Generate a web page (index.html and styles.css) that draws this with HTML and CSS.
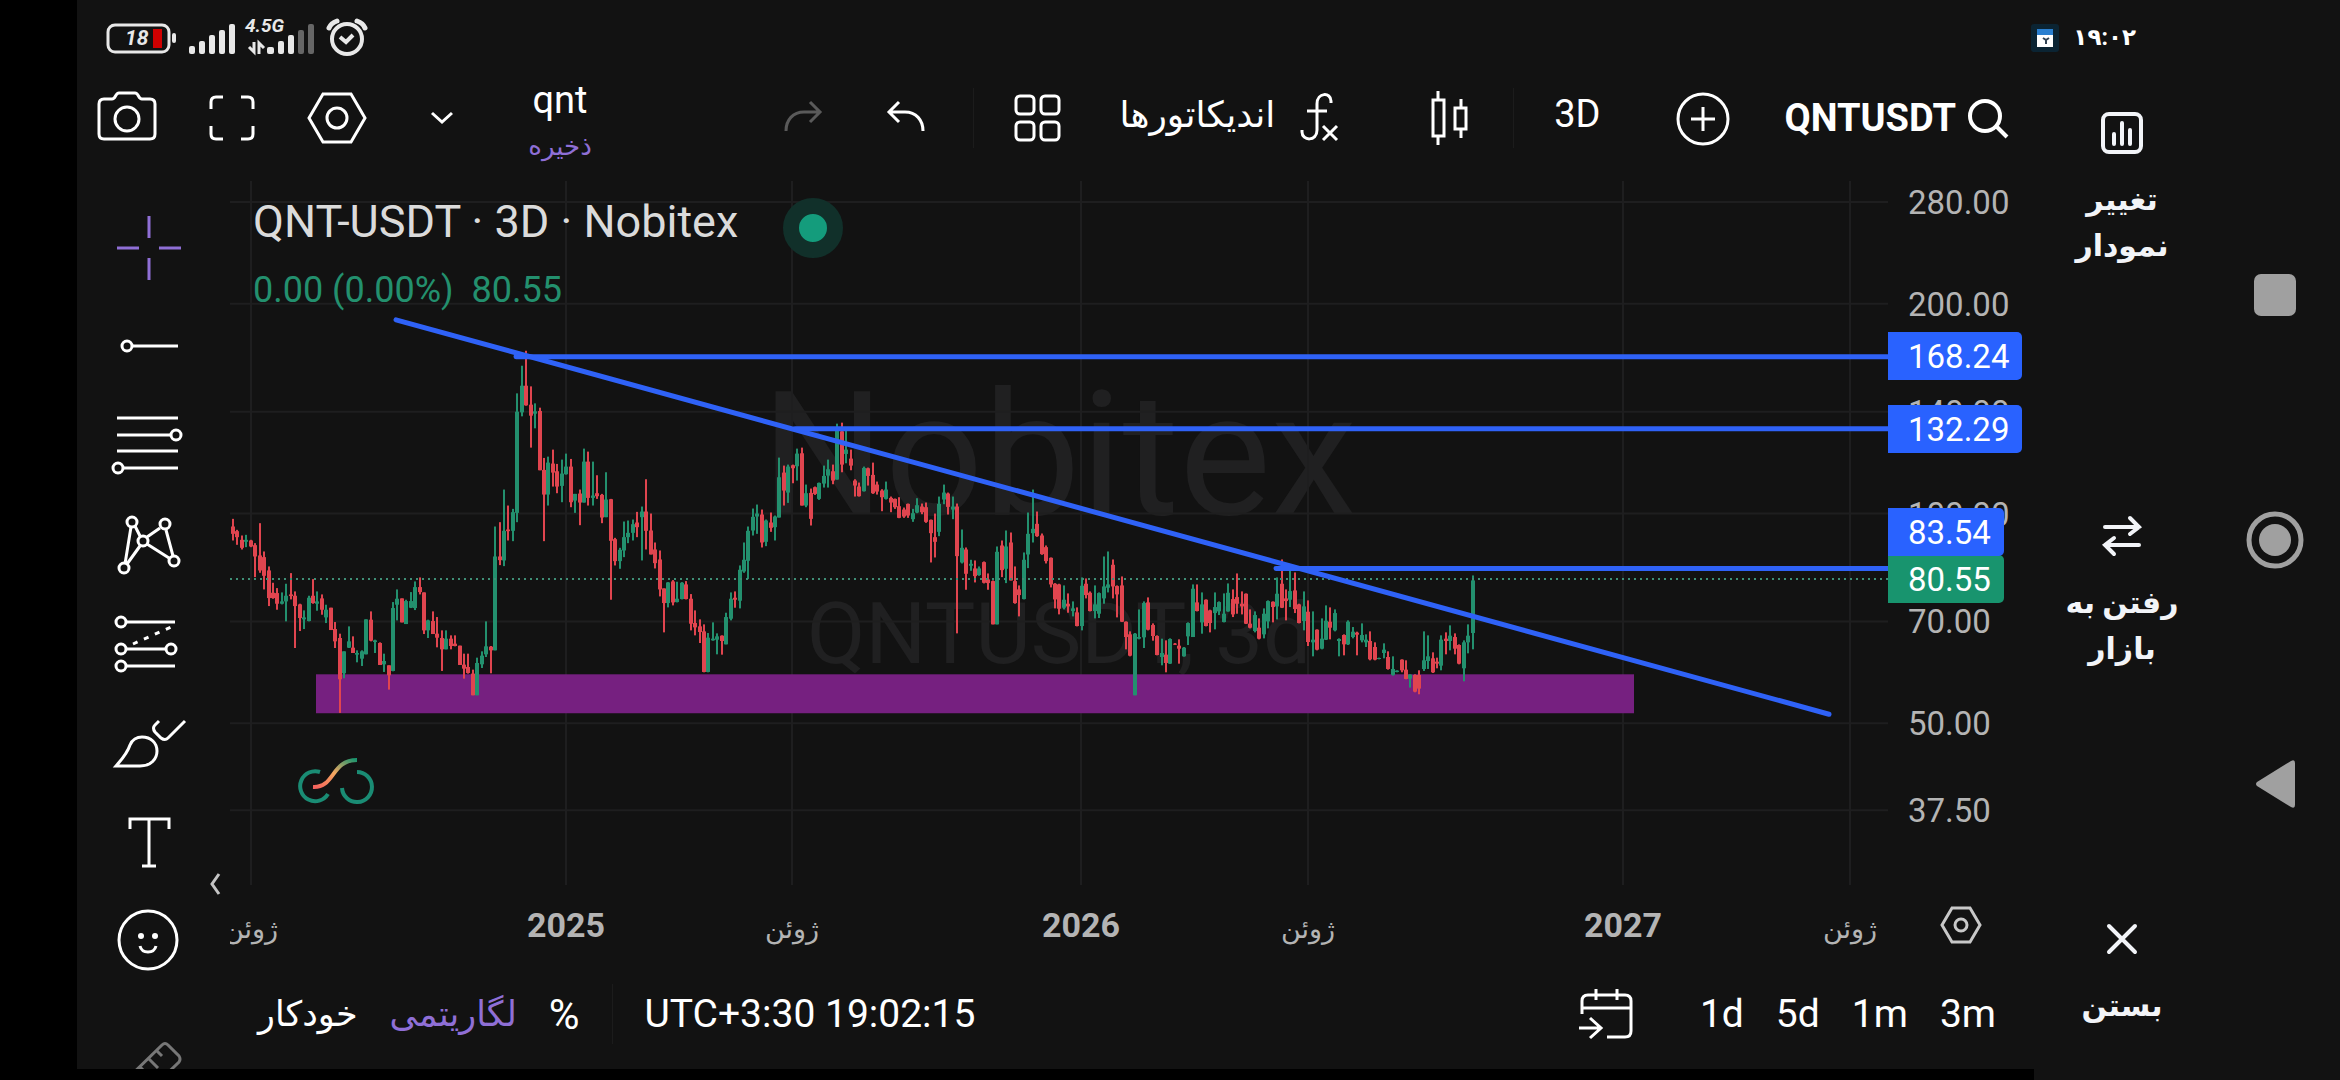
FILE: index.html
```html
<!DOCTYPE html>
<html lang="fa">

<head>
    <meta charset="utf-8">
    <meta name="viewport" content="width=device-width, initial-scale=1.0">
    <title>QNT-USDT</title>
    <link rel="stylesheet" href="styles.css">
</head>

<body>
    <div class="phone">
        <header class="status">
            <svg class="status-icons" width="266" height="50" viewBox="0 0 266 50" aria-hidden="true">
                <rect x="3" y="12" width="61" height="27" rx="7" fill="none" stroke="#e8e8e8" stroke-width="3" />
                <rect x="67" y="20" width="4" height="10" rx="2" fill="#e8e8e8" />
                <rect x="48" y="16" width="9" height="19" fill="#d00000" />
                <text class="battery-text" x="20" y="32">18</text>
                <g fill="#e8e8e8">
                    <rect x="84" y="33" width="6" height="8" rx="2" />
                    <rect x="94" y="28" width="6" height="13" rx="2" />
                    <rect x="104" y="22" width="6" height="19" rx="2" />
                    <rect x="114" y="17" width="6" height="24" rx="2" />
                    <rect x="124" y="11" width="6" height="30" rx="2" />
                    <rect x="162" y="34" width="7" height="7" rx="2" />
                    <rect x="173" y="28" width="6" height="13" rx="2" />
                    <rect x="183" y="22" width="6" height="19" rx="2" />
                </g>
                <rect x="193" y="17" width="6" height="24" rx="2" fill="#666" />
                <rect x="203" y="11" width="6" height="30" rx="2" fill="#666" />
                <path d="M149 29V39L144 34M154 41V30L159 35" fill="none" stroke="#e8e8e8" stroke-width="3" />
                <text class="network-text" x="140" y="19">4.5G</text>
                <g fill="none" stroke="#e8e8e8" stroke-width="4">
                    <circle cx="242" cy="26" r="15" />
                    <path d="M235 24L241 29L248 22" />
                    <path d="M224 15Q226 10 232 8M252 8Q258 10 260 15" stroke-width="5" stroke-linecap="round" />
                </g>
            </svg>
            <div class="status-time">
                <svg width="28" height="28" viewBox="0 0 28 28" aria-hidden="true">
                    <rect width="28" height="28" rx="3" fill="#0b2433" />
                    <rect x="6" y="5" width="16" height="6" fill="#2a7fd0" />
                    <rect x="6" y="11" width="16" height="12" fill="#fff" />
                    <path d="M12 14L15 16V20M15 16L18 14" fill="none" stroke="#345" stroke-width="2" />
                </svg>
                <time>۱۹:۰۲</time>
            </div>
        </header>

        <div class="content">
            <main class="app">
                <div class="toolbar">
                    <div class="tools-left">
                        <button class="icon-btn" aria-label="snapshot">
                            <svg viewBox="0 0 60 60">
                                <path d="M7 11H15C19 11 18 5 22 5H38C42 5 41 11 45 11H53Q58 11 58 16V46Q58 51 53 51H7Q2 51 2 46V16Q2 11 7 11Z" />
                                <circle cx="30" cy="31" r="12" />
                            </svg>
                        </button>
                        <button class="icon-btn" aria-label="fullscreen">
                            <svg viewBox="0 0 60 60">
                                <path d="M9 21V14Q9 9 14 9H21M39 9H46Q51 9 51 14V21M51 38V46Q51 51 46 51H39M21 51H14Q9 51 9 46V38" />
                            </svg>
                        </button>
                        <button class="icon-btn" aria-label="settings">
                            <svg viewBox="0 0 60 60">
                                <path d="M2 30L16 6H44L58 30L44 54H16Z" />
                                <circle cx="30" cy="30" r="10" />
                            </svg>
                        </button>
                        <button class="icon-btn" aria-label="layouts">
                            <svg viewBox="0 0 60 60"><path d="M20 25L30 34L40 25" /></svg>
                        </button>
                        <button class="layout-name">
                            <span>qnt</span>
                            <span class="save">ذخیره</span>
                        </button>
                    </div>
                    <div class="tools-right">
                        <button class="icon-btn disabled" aria-label="redo" disabled>
                            <svg viewBox="0 0 60 60"><path d="M13 43C13 32 20 24 31 24H47M37 14L47 24L37 34" /></svg>
                        </button>
                        <button class="icon-btn undo" aria-label="undo">
                            <svg viewBox="0 0 60 60"><path d="M47 43C47 32 40 24 29 24H13M23 14L13 24L23 34" /></svg>
                        </button>
                        <span class="sep"></span>
                        <button class="icon-btn" aria-label="layout grid">
                            <svg viewBox="0 0 60 60">
                                <rect x="9" y="8" width="18" height="18" rx="4" />
                                <rect x="34" y="8" width="18" height="18" rx="4" />
                                <rect x="9" y="34" width="18" height="18" rx="4" />
                                <rect x="34" y="34" width="18" height="18" rx="4" />
                            </svg>
                        </button>
                        <button class="indicators">
                            <span>اندیکاتورها</span>
                            <svg width="60" height="60" viewBox="0 0 60 60" aria-hidden="true">
                                <path d="M42 15V13C42 4 28 4 28 16V42C28 54 13 53 13 44V42M18 23H38M34 38L48 52M48 38L34 52" />
                            </svg>
                        </button>
                        <button class="icon-btn candles-btn" aria-label="chart type">
                            <svg viewBox="0 0 60 60">
                                <path d="M14 12H25V48H14ZM19 3V12M19 48V57M36 20H47V41H36ZM42 11V20M42 41V50" />
                            </svg>
                        </button>
                        <span class="sep"></span>
                        <button class="interval">3D</button>
                        <button class="icon-btn add" aria-label="compare">
                            <svg viewBox="0 0 60 60">
                                <circle cx="30" cy="31" r="25" />
                                <path d="M18 31H42M30 19V43" />
                            </svg>
                        </button>
                        <button class="symbol">
                            <span>QNTUSDT</span>
                            <svg width="44" height="44" viewBox="0 0 44 44" aria-hidden="true">
                                <circle cx="19" cy="20" r="15" />
                                <path d="M30 30L41 41" />
                            </svg>
                        </button>
                    </div>
                </div>

                <div class="workspace">
                    <div class="drawbar">
                        <button class="draw active" aria-label="cross">
                            <svg viewBox="0 0 70 70"><path d="M3 35H25M45 35H67M35 3V25M35 45V67" /></svg>
                        </button>
                        <button class="draw" aria-label="trend line">
                            <svg viewBox="0 0 70 70"><circle cx="13" cy="34" r="5" /><path d="M18 34H64" /></svg>
                        </button>
                        <button class="draw" aria-label="fibonacci">
                            <svg viewBox="0 0 70 70">
                                <path d="M3 7H64M3 24H57M3 40H64M9 57H64" />
                                <circle cx="62" cy="24" r="5" /><circle cx="4" cy="57" r="5" />
                            </svg>
                        </button>
                        <button class="draw" aria-label="patterns">
                            <svg viewBox="0 0 70 70">
                                <path d="M17 17L11 54M21 16L26 26M33 27L46 18M52 20L59 46M33 34L55 48M26 36L13 54" />
                                <circle cx="18" cy="12" r="5" /><circle cx="51" cy="14" r="5" /><circle cx="29" cy="31" r="5" />
                                <circle cx="10" cy="58" r="5" /><circle cx="60" cy="51" r="5" />
                            </svg>
                        </button>
                        <button class="draw" aria-label="forecast">
                            <svg viewBox="0 0 70 70">
                                <path d="M12 13H61M12 40H52M12 57H61" />
                                <path d="M19 35L57 18" stroke-dasharray="5 7" />
                                <circle cx="7" cy="13" r="5" /><circle cx="7" cy="40" r="5" />
                                <circle cx="57" cy="40" r="5" /><circle cx="7" cy="57" r="5" />
                            </svg>
                        </button>
                        <button class="draw" aria-label="brush">
                            <svg viewBox="0 0 70 70">
                                <path d="M2 58H26C37 58 43 51 43 43C43 35 37 29 28 29C23 29 18 32 16 37C13 46 8 51 2 58Z" />
                                <path d="M45 13L41 17Q38 20 41 24L47 30Q51 33 54 30L71 13" />
                            </svg>
                        </button>
                        <button class="draw" aria-label="text">
                            <svg viewBox="0 0 70 70"><path d="M16 22V12H55V22M35 12V59M28 59H42" /></svg>
                        </button>
                        <button class="draw" aria-label="emoji">
                            <svg viewBox="0 0 70 70">
                                <circle cx="34" cy="34" r="29" />
                                <path d="M26 40C28 48 40 48 42 40" />
                                <g class="eyes"><circle cx="27" cy="30" r="3" /><circle cx="41" cy="30" r="3" /></g>
                            </svg>
                        </button>
                        <button class="draw ruler" aria-label="measure">
                            <svg viewBox="0 0 70 70">
                                <path d="M48 12Q51 9 54 12L65 23Q67 26 65 29L25 68L5 54ZM43 18L48 23M35 26L44 35M26 34L31 39M18 42L27 51" />
                            </svg>
                        </button>
                        <button class="collapse" aria-label="collapse">
                            <svg width="12" height="24" viewBox="0 0 12 24"><path d="M10 2L3 12L10 22" /></svg>
                        </button>
                    </div>

                    <div class="plot">
                        <div class="watermark">
                            <div class="wm-exchange">Nobitex</div>
                            <div class="wm-symbol">QNTUSDT, 3d</div>
                        </div>
                        <svg class="chart" id="chart" viewBox="0 0 1658 705" preserveAspectRatio="none" role="img" aria-label="QNTUSDT">
                            <g id="grid" class="grid"></g>
                            <rect class="zone" x="86" y="494" width="1318" height="39" />
                            <g id="candles"></g>
                            <path class="last" id="last" />
                            <g class="trend">
                                <path d="M166 139L1599 534" />
                                <path d="M286 176H1658M565 248H1658M1046 388H1658" />
                            </g>
                        </svg>
                        <div class="legend">
                            <div class="legend-title">QNT-USDT · 3D · Nobitex <span class="dot"></span></div>
                            <div class="legend-values"><span>0.00 (0.00%)</span> <span>80.55</span></div>
                        </div>
                        <svg class="logo" width="82" height="52" viewBox="0 0 82 52" aria-hidden="true">
                            <defs>
                                <linearGradient id="wave" x1="0" y1="1" x2="1" y2="0">
                                    <stop offset="0" stop-color="#f4605c" />
                                    <stop offset=".5" stop-color="#f5a860" />
                                    <stop offset="1" stop-color="#18946e" />
                                </linearGradient>
                            </defs>
                            <path d="M25 17A15 15 0 1 0 33 39M62 17A15 15 0 1 1 47 33" stroke="#1a8c74" />
                            <path d="M18 32C40 33 36 5 62 5" stroke="url(#wave)" />
                        </svg>
                    </div>
                    <div class="price-axis" id="prices"></div>

                    <div class="time-axis" id="times"></div>
                    <button class="axis-settings" aria-label="axis settings">
                        <svg width="42" height="42" viewBox="0 0 42 42">
                            <path d="M2 21L12 4H30L40 21L30 38H12Z" /><circle cx="21" cy="21" r="6" />
                        </svg>
                    </button>

                    <div class="bottombar">
                        <button class="fa">خودکار</button>
                        <button class="fa log">لگاریتمی</button>
                        <button class="percent">%</button>
                        <span class="sep"></span>
                        <button>UTC+3:30 19:02:15</button>
                        <button class="goto" aria-label="go to date">
                            <svg width="60" height="60" viewBox="0 0 60 60">
                                <path d="M6 30V17Q6 11 12 11H49Q55 11 55 17V47Q55 53 49 53H31M6 24H55M20 5V16M41 5V16M3 44H25M14 34L25 44L14 54" />
                            </svg>
                        </button>
                        <button>1d</button>
                        <button>5d</button>
                        <button>1m</button>
                        <button>3m</button>
                    </div>
                </div>
            </main>

            <aside class="side">
                <button class="side-btn">
                    <svg width="44" height="44" viewBox="0 0 44 44" aria-hidden="true">
                        <rect x="3" y="3" width="38" height="38" rx="6" />
                        <path d="M14 23V33M22 12V33M30 19V33" />
                    </svg>
                    <span>تغییر نمودار</span>
                </button>
                <button class="side-btn">
                    <svg width="44" height="44" viewBox="0 0 44 44" aria-hidden="true">
                        <path d="M5 13H39M30 4L39 13L30 20M39 31H5M14 24L5 31L14 40" />
                    </svg>
                    <span>رفتن به بازار</span>
                </button>
                <button class="side-btn">
                    <svg width="44" height="44" viewBox="0 0 44 44" aria-hidden="true"><path d="M9 9L35 35M35 9L9 35" /></svg>
                    <span>بستن</span>
                </button>
            </aside>
        </div>
    </div>

    <nav class="nav">
        <button aria-label="recent"><svg viewBox="0 0 60 60"><rect x="9" y="9" width="42" height="42" rx="7" fill="#a0a0a0" /></svg></button>
        <button aria-label="home">
            <svg viewBox="0 0 60 60">
                <circle cx="30" cy="30" r="26" fill="none" stroke="#a0a0a0" stroke-width="5" />
                <circle cx="30" cy="30" r="16" fill="#a0a0a0" />
            </svg>
        </button>
        <button aria-label="back"><svg viewBox="0 0 60 60"><path d="M46 6Q50 4 50 8V50Q50 54 46 52L12 31Q10 29 12 27Z" fill="#a0a0a0" /></svg></button>
    </nav>

    <script src="chart.js"></script>
</body>

</html>
```

FILE: styles.css
```css
* {
    box-sizing: border-box;
}

body {
    margin: 0;
    height: 100vh;
    padding-left: 77px;
    display: flex;
    overflow: hidden;
    background: #000;
    color: #fff;
    font-family: Roboto, "DejaVu Sans", sans-serif;
}

button {
    margin: 0;
    padding: 0;
    border: 0;
    background: none;
    color: inherit;
    font: inherit;
    cursor: pointer;
}

svg {
    display: block;
    overflow: visible;
}

.phone {
    flex: 1;
    min-width: 0;
    display: flex;
    flex-direction: column;
}

/* status bar */
.status {
    height: 75px;
    padding: 0 74px 0 28px;
    display: flex;
    align-items: center;
    justify-content: space-between;
    background: #121212;
}

.battery-text,
.network-text {
    fill: #e8e8e8;
    font-size: 21px;
    font-weight: 700;
    font-style: italic;
}

.network-text {
    font-size: 19px;
}

.status-time {
    display: flex;
    align-items: center;
    gap: 14px;
    font-size: 23px;
    font-weight: 700;
}

.content {
    flex: 1;
    min-height: 0;
    display: flex;
}

.app {
    flex: 1;
    min-width: 0;
    margin-bottom: 11px;
    display: flex;
    flex-direction: column;
    background: #121212;
}

/* top toolbar */
.toolbar {
    height: 106px;
    padding: 0 24px 0 20px;
    display: flex;
    justify-content: space-between;
    font-size: 38px;
}

.toolbar svg {
    fill: none;
    stroke: #fff;
    stroke-width: 3;
}

.tools-left,
.tools-right {
    height: 86px;
    display: flex;
    align-items: center;
}

.tools-left {
    gap: 45px;
}

.icon-btn {
    width: 60px;
    height: 60px;
}

.disabled svg {
    stroke: #5a5a5a;
}

.layout-name {
    width: 86px;
    padding-top: 10px;
    display: flex;
    flex-direction: column;
    align-items: center;
    line-height: 46px;
}

.save {
    color: #8f6fd6;
    font-size: 26px;
}

.sep {
    width: 1px;
    height: 60px;
    background: #1c1c1c;
}

.undo {
    margin: 0 37px 0 43px;
}

.sep + .icon-btn {
    margin-left: 33px;
}

.indicators {
    margin-left: 52px;
    display: flex;
    align-items: center;
    gap: 14px;
    font-size: 36px;
    line-height: 60px;
}

.indicators span {
    padding-bottom: 6px;
}

.candles-btn {
    margin: 0 34px 0 70px;
}

.interval {
    margin-left: 40px;
    padding-bottom: 8px;
}

.add {
    margin: 0 52px 0 72px;
}

.symbol {
    display: flex;
    align-items: center;
    gap: 10px;
    font-weight: 700;
}

.symbol svg {
    stroke-width: 4;
}

/* chart area */
.workspace {
    flex: 1;
    min-height: 0;
    display: grid;
    grid-template-columns: 153px 1fr 146px;
    grid-template-rows: 1fr 80px 104px;
}

.drawbar {
    grid-row: 1 / 4;
    position: relative;
    padding-top: 17px;
    overflow: hidden;
}

.draw {
    width: 144px;
    height: 99px;
    display: flex;
    align-items: center;
    justify-content: center;
}

.draw svg {
    width: 70px;
    height: 70px;
    fill: none;
    stroke: #fff;
    stroke-width: 3;
}

.active svg {
    stroke: #8f6fd6;
}

.draw .eyes {
    fill: #fff;
    stroke: none;
}

.ruler {
    margin-top: 28px;
}

.ruler svg {
    stroke: #777;
}

.collapse {
    position: absolute;
    top: 691px;
    right: 9px;
}

.collapse svg {
    fill: none;
    stroke: #c4c4c4;
    stroke-width: 3;
}

.plot {
    position: relative;
    min-width: 0;
    min-height: 0;
}

.chart {
    position: absolute;
    width: 100%;
    height: 100%;
}

.grid {
    stroke: #1e1e1f;
    stroke-width: 2;
}

.zone {
    fill: #762080;
}

.trend {
    fill: none;
    stroke: #2f62f7;
    stroke-width: 5;
    stroke-linecap: round;
}

.up {
    fill: #23906e;
}

.down {
    fill: #e0454f;
}

.last {
    stroke: #3f8f76;
    stroke-width: 2;
    stroke-dasharray: 2 4;
}

.watermark {
    position: absolute;
    inset: 0;
    padding-top: 174px;
    text-align: center;
    color: #202021;
}

.wm-exchange {
    font-size: 173px;
    line-height: 200px;
}

.wm-symbol {
    font-size: 85px;
    line-height: 158px;
}

.legend {
    position: relative;
    padding: 9px 0 0 23px;
}

.legend-title {
    display: flex;
    align-items: flex-start;
    gap: 45px;
    font-size: 45px;
    line-height: 64px;
    color: #dbdbdb;
}

.dot {
    width: 60px;
    height: 60px;
    margin-top: 8px;
    border: 16px solid #11302a;
    border-radius: 50%;
    background: #149c7c;
}

.legend-values {
    display: flex;
    gap: 18px;
    margin-top: 12px;
    font-size: 36px;
    line-height: 40px;
    color: #23906e;
}

.logo {
    position: absolute;
    left: 65px;
    bottom: 78px;
    fill: none;
    stroke-width: 4;
    background: #121212;
}

/* axes */
.price-axis {
    position: relative;
    font-size: 33px;
    color: #b4b4b4;
}

.price,
.tag {
    position: absolute;
    left: 0;
    height: 48px;
    margin-top: -24px;
    padding: 1px 13px 0 20px;
    line-height: 48px;
}

.tag {
    border-radius: 0 5px 5px 0;
    background: #2962ff;
    color: #fff;
}

.tag-last {
    background: #18946e;
}

.time-axis {
    grid-column: 2;
    position: relative;
    overflow: hidden;
    font-size: 27px;
    line-height: 80px;
    color: #b4b4b4;
}

.time-axis span {
    position: absolute;
    transform: translateX(-50%);
}

.time-axis .month {
    padding-top: 4px;
}

.time-axis .year {
    font-size: 34px;
    font-weight: 700;
}

.axis-settings {
    display: flex;
    align-items: center;
    padding-left: 52px;
}

.axis-settings svg {
    fill: none;
    stroke: #c8c8c8;
    stroke-width: 3;
}

/* bottom toolbar */
.bottombar {
    grid-column: 2 / 4;
    height: 98px;
    padding: 0 38px 0 28px;
    display: flex;
    align-items: center;
    gap: 32px;
    font-size: 39px;
}

.bottombar .fa {
    font-size: 35px;
}

.bottombar .log {
    color: #8f6fd6;
}

.bottombar .percent {
    font-size: 42px;
}

.goto {
    margin: 0 32px 0 auto;
}

.goto svg {
    fill: none;
    stroke: #fff;
    stroke-width: 3;
}

/* side panel */
.side {
    width: 176px;
    padding: 36px 20px 51px;
    display: flex;
    flex-direction: column;
    justify-content: space-between;
    background: #121212;
}

.side-btn {
    display: flex;
    flex-direction: column;
    align-items: center;
    gap: 22px;
    font-size: 30px;
    font-weight: 700;
    line-height: 46px;
    color: #f2f4f8;
}

.side-btn span {
    padding: 0 8px;
}

.side-btn svg {
    fill: none;
    stroke: #f2f4f8;
    stroke-width: 4;
    stroke-linecap: round;
}

.nav {
    width: 130px;
    display: flex;
    flex-direction: column;
    align-items: center;
    justify-content: center;
    gap: 185px;
    background: #121212;
}

.nav button {
    width: 60px;
    height: 60px;
}
```

FILE: chart.js
```js
var W = 1658, H = 705;
var NS = "http://www.w3.org/2000/svg";

// log scale: 280 sits 21 units below the top
function priceY(p) {
    return 21 + Math.log(280 / p) * 303;
}

function add(parent, name, attrs) {
    var el = document.createElementNS(NS, name);
    for (var k in attrs) el.setAttribute(k, attrs[k]);
    parent.appendChild(el);
    return el;
}

var prices = [280, 200, 140, 100, 70, 50, 37.5];
var times = [[21, "ژوئن"], [336, "2025"], [562, "ژوئن"], [851, "2026"], [1078, "ژوئن"], [1393, "2027"], [1620, "ژوئن"]];
var tags = [[80.55, "tag tag-last"], [83.54, "tag"], [132.29, "tag"], [168.24, "tag"]];

var grid = document.getElementById("grid");
var priceAxis = document.getElementById("prices");
var timeAxis = document.getElementById("times");

function label(parent, cls, text, side, pos) {
    var s = document.createElement("span");
    s.className = cls;
    s.textContent = text;
    s.style[side] = pos + "%";
    parent.appendChild(s);
}

prices.forEach(function (p) {
    var y = priceY(p);
    add(grid, "line", { x1: 0, x2: W, y1: y, y2: y });
    label(priceAxis, "price", p.toFixed(2), "top", y / H * 100);
});

times.forEach(function (t) {
    add(grid, "line", { x1: t[0], x2: t[0], y1: 0, y2: H });
    label(timeAxis, t[1] > 0 ? "year" : "month", t[1], "left", t[0] / W * 100);
});

// tags are pushed up when they would cover the one below
var below = Infinity;
tags.forEach(function (t) {
    var y = Math.min(priceY(t[0]), below - 47);
    label(priceAxis, t[1], t[0].toFixed(2), "top", y / H * 100);
    below = y;
});

document.getElementById("last").setAttribute("d", "M0 " + priceY(80.55) + "H" + W);

// direction, high, body top, body bottom, low (thirds of a unit, from the group's top)
var groups = [
    { top: 160, bars: "r535,558,580,600 r568,572,590,613 r585,598,622,627 g583,598,604,620 r598,600,618,620 r608,614,648,710 r548,645,690,697 r633,650,706,747 r678,690,773,797 r727,757,773,775 r743,758,790,808 g756,783,790,792 g730,766,783,843 r698,762,767,777 r753,766,797,923 r790,792,833,872 g810,831,837,866 g766,772,842,843 r716,766,788,790 g753,783,790,811 r762,774,808,823 g793,808,831,848 r802,802,869,869 r845,866,903,923 r880,893,1017,1118 g933,933,999,1014 g858,903,922,923 r888,922,938,938 g930,938,943,966 g930,933,955,977 g837,837,942,942 r813,838,901,903 g898,900,905,938 r906,908,974,974 g940,962,972,995 r975,975,1005,1048 g785,803,992,993 g747,775,793,840 r774,774,846,846 g778,782,851,851 g755,782,802,803 g723,740,803,809 r711,740,755,762 r756,756,870,881 g838,840,870,893 r813,842,881,881 r830,880,892,921 r870,893,927,992 g870,895,927,927 r885,895,917,927 r885,910,917,918 r916,916,974,974 r940,973,985,1015 r940,980,998,1000 r988,1000,1065,1065 g952,968,1065,1065 g933,946,972,983 g843,918,942,950 r917,919,930,999 g558,648,930,930 r545,648,659,674 g447,571,660,677 r495,567,572,600 g505,515,571,602 g158,213,517,545 g75,135,215,227 r30,135,194,195 r137,192,225,321 g188,212,219,263 r201,211,389,389 r352,388,462,602 g348,366,462,495 r327,369,396,438 r370,392,438,458 g357,399,436,485 g339,378,401,402 r355,378,485,500 g460,460,480,517 r447,459,486,554 g324,363,486,486 r333,363,472,495 g363,465,472,495 r404,458,467,475 r460,463,531,548 g395,477,530,530 r475,476,601,778 r592,596,662,675 g622,628,662,685 g543,590,630,650 g540,577,590,608 g537,551,577,600 r514,546,560,590" },
    { top: 200, bars: "g378,393,410,540 r296,393,451,507 r399,450,522,522 r486,507,548,564 r510,537,627,648 r624,624,668,756 g605,606,668,681 r599,603,666,675 g604,655,665,666 g605,607,656,657 r602,612,656,657 r641,655,730,750 r690,728,741,765 r717,738,755,788 r732,753,875,876 g758,772,875,876 g726,775,780,781 g759,768,778,822 r765,766,782,823 g697,710,792,792 g636,655,715,720 r633,652,658,682 g555,568,661,684 g486,538,573,577 g438,451,541,596 g384,409,450,465 g372,399,408,460 r387,402,486,501 g417,420,484,497 r396,426,442,454 g405,408,440,480 g231,290,411,411 r255,276,330,375 g252,258,336,367 r252,254,263,308 g204,219,257,300 r201,218,375,375 g312,338,375,380 r324,337,415,435 r318,320,340,343 g306,307,355,358 g255,286,309,321 g237,266,285,321 r252,272,300,311 g129,150,297,297 r126,152,252,275 g148,207,220,248 r207,234,255,269 r296,300,315,348 r306,318,347,348 g258,262,332,333 r261,263,286,315 r246,283,338,340 r303,312,333,342 r326,330,350,392 g303,327,355,357 r348,352,366,395 r354,355,380,385 r350,377,412,413 r381,387,408,412 r369,370,405,412 g385,398,416,424 g353,374,396,398 r369,378,395,401 r366,380,424,427 r417,418,458,546 r399,470,484,531 g348,370,454,467 g312,336,357,371 r336,339,379,402 g348,378,387,416 r369,378,527,759 g447,502,546,549 r501,507,580,628 g538,550,556,571 r540,564,587,606 g558,564,584,586 r543,545,607,609 r579,597,608,628 r600,602,732,732 g498,514,732,732 r480,495,569,590 g450,498,565,608 r456,486,600,600 r558,602,668,670 r615,627,644,708 g516,538,656,657 g396,460,522,563 g327,445,458,486 r393,430,467,469 r459,465,521,523 r495,500,542,549 r531,532,612,621 r608,610,657,684 r610,612,685,702" },
    { top: 290, bars: "g345,388,412,417 r369,400,408,427 g393,414,422,438 r411,426,467,468 g321,346,467,480 r324,340,374,384 r363,367,422,423 g345,402,422,444 g366,368,430,443 g258,348,384,400 g243,342,352,366 r267,283,348,384 r345,347,372,441 r318,345,454,455 r453,454,500,537 r483,492,556,558 g488,490,675,675 g417,500,505,507 g393,398,501,533 r381,396,478,480 r459,464,497,511 r495,497,554,555 g505,548,560,585 r510,553,578,606 g504,506,580,581 r518,520,523,524 r507,526,535,580 g530,532,558,559 g456,458,498,524 g342,355,500,500 r342,396,422,423 g366,402,456,490 r387,388,467,468 r418,420,458,486 g366,410,428,477 g393,395,423,434 g369,430,455,456 g339,367,423,424 r357,386,432,440 r309,380,400,430 r363,400,408,432 r369,370,460,461 r417,460,472,474 g423,434,482,486 r444,472,505,507 g414,430,492,504 g390,392,453,474 r393,394,410,456 g321,370,408,447 r267,340,412,413 r357,384,392,450 g300,362,388,410 r306,360,416,428 r400,402,458,459 g363,408,452,480 r390,424,515,527 g423,508,516,558 r477,478,538,540 g444,505,535,537 g405,451,508,509 r411,454,472,507 g417,428,480,483 g504,506,512,558 r492,494,522,555 g450,454,522,524 g470,484,500,504 r484,487,493,555 g459,494,510,516 g492,508,516,530 r483,512,567,570 r516,530,568,570 g562,563,566,567 g519,538,548,564 r543,560,596,598 g558,596,614,616 g600,601,605,606 r567,568,600,606 r570,598,626,627 g612,613,625,652 r612,614,664,666 r600,614,655,672 g483,570,596,602 g495,558,572,596 r546,564,606,608 r562,574,580,594 g495,508,586,600 r486,505,512,552 g465,496,512,540 r489,500,535,552 r522,524,580,582 g510,516,594,633 g462,496,516,549 g315,330,488,537" }
];

var candles = document.getElementById("candles");
var i = 0;
groups.forEach(function (g) {
    g.bars.split(" ").forEach(function (bar) {
        var v = bar.slice(1).split(",").map(function (n) { return g.top + n / 3; });
        var x = Math.round(3 + i * 4.443);
        var cls = bar[0] === "g" ? "up" : "down";
        add(candles, "rect", { "class": cls, x: x - 1, y: v[0], width: 2, height: v[3] - v[0] });
        add(candles, "rect", { "class": cls, x: x - 2, y: v[1], width: 4, height: Math.max(v[2] - v[1], 1) });
        i++;
    });
});
```
